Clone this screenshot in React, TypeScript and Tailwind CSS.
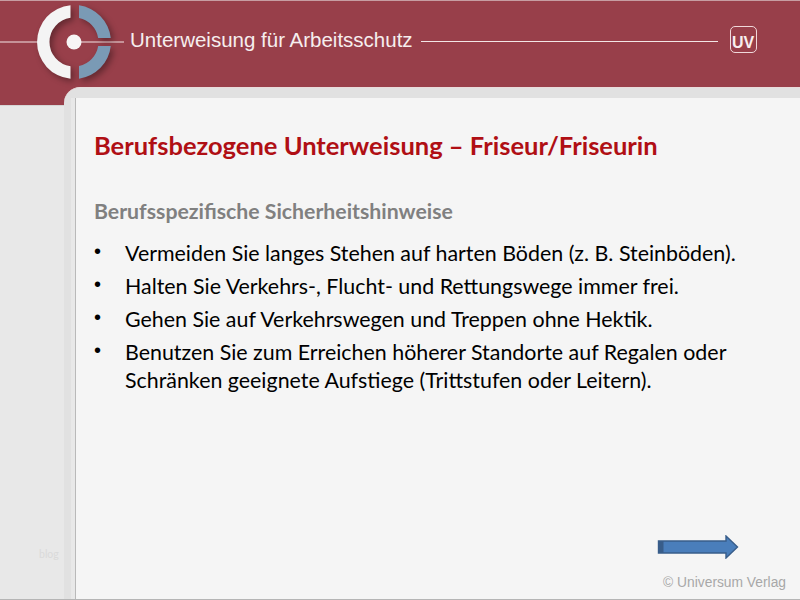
import React from 'react';

const bullets = [
  'Vermeiden Sie langes Stehen auf harten Böden (z. B. Steinböden).',
  'Halten Sie Verkehrs-, Flucht- und Rettungswege immer frei.',
  'Gehen Sie auf Verkehrswegen und Treppen ohne Hektik.',
  'Benutzen Sie zum Erreichen höherer Standorte auf Regalen oder Schränken geeignete Aufstiege (Trittstufen oder Leitern).',
];

const Logo = () => (
  <svg width="130" height="90" viewBox="0 0 130 90" className="shrink-0 overflow-visible">
    <path d="M0 41H38M80 41H124" stroke="#f3e6e6" strokeWidth="1.2" />
    <g className="drop-shadow-[3px_3px_3px_rgba(0,0,0,0.35)]">
      <path d="M70.5 4.17A37 37 0 0 0 70.5 77.83L70.5 65.25A24.5 24.5 0 0 1 70.5 16.75Z" fill="#f4f4f4" />
      <path d="M79 4.34A37 37 0 0 1 110.78 37L98.17 37A24.5 24.5 0 0 0 79 17.02Z" fill="#7a9ab5" />
      <path d="M79 77.66A37 37 0 0 0 110.78 45L98.17 45A24.5 24.5 0 0 1 79 64.98Z" fill="#7a9ab5" />
    </g>
    <circle cx="74" cy="41" r="7.5" fill="#f7f5f5" />
  </svg>
);

const Arrow = () => (
  <svg width="82" height="24" viewBox="0 0 82 24" className="block">
    <path d="M1.5 6H69V1L80.5 12L69 23V18H1.5Z" fill="#4a7ebb" stroke="#385d8a" strokeWidth="1.4" />
    <rect x="1.5" y="6" width="5" height="12" fill="#385d8a" />
  </svg>
);

export default function App() {
  return (
    <div className="w-[800px] h-[600px] flex flex-col overflow-hidden bg-[#e8e8e8] border-b border-[#b5b5b5] font-['Lato',sans-serif]">
      <header className="h-[105px] shrink-0 bg-[#983f4a] border-t border-[#c79da2] flex items-start">
        <Logo />
        <span className="mt-[24px] text-[20.5px] leading-[30px] text-[#f6eeee] font-['Liberation_Sans',sans-serif]">
          Unterweisung für Arbeitsschutz
        </span>
        <div className="mt-[40px] ml-[8px] w-[297px] h-px bg-[#f3e6e6]" />
        <div className="mt-[25px] ml-[12px] w-[27px] h-[27px] rounded-[5px] border border-[#f0d8da] flex items-center justify-center">
          <span className="text-[16px] leading-none font-bold text-[#f8eeee] font-['Liberation_Sans',sans-serif] mt-[7px]">UV</span>
        </div>
      </header>

      <div className="flex flex-1 min-h-0">
        <aside className="w-[64px] shrink-0 flex flex-col justify-end pb-[40px] pl-[39px] border-t border-[#d5d5d5]">
          <span className="text-[10.5px] leading-none text-[#dadada]">blog</span>
        </aside>
        <div className="flex-1 -mt-[18px] z-10 bg-[#e1e1e1] rounded-tl-[16px] pt-[10px] pl-[7px] border-t border-[#e9dcdc]">
          <div className="h-full bg-[#e8e8e8] pl-[4px]">
            <main className="h-full bg-[#f5f5f5] border-l border-[#b9b9b9] pl-[18px] pr-[14px] pt-[31px] flex flex-col">
              <h1 className="text-[25.5px] leading-[32px] font-bold text-[#b00f14]">
                Berufsbezogene Unterweisung – Friseur/Friseurin
              </h1>
              <h2 className="mt-[37px] text-[21.25px] leading-[26px] font-bold text-[#808080]">
                Berufsspezifische Sicherheitshinweise
              </h2>
              <ul className="mt-[15px] flex flex-col gap-[5px] text-[21.4px] leading-[28px] text-black">
                {bullets.map((b) => (
                  <li key={b} className="flex">
                    <span className="w-[31px] shrink-0 text-[20px] leading-[25px] font-['Liberation_Sans',sans-serif]">•</span>
                    <span>{b}</span>
                  </li>
                ))}
              </ul>
              <div className="mt-auto flex flex-col items-end pb-[7px]">
                <div className="mr-[47px] mb-[15px]">
                  <Arrow />
                </div>
                <span className="text-[13.8px] leading-[18px] text-[#a8a8a8] font-['Liberation_Sans',sans-serif]">© Universum Verlag</span>
              </div>
            </main>
          </div>
        </div>
      </div>
    </div>
  );
}
